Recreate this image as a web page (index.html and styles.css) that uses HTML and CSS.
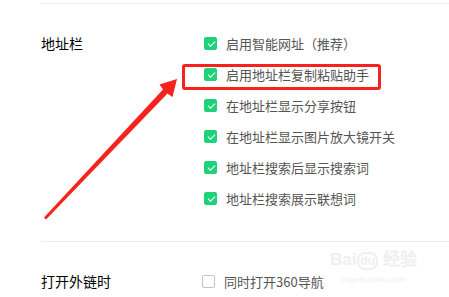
FILE: index.html
```html
<!DOCTYPE html>
<html lang="zh-CN">
<head>
  <meta charset="UTF-8" />
  <title>设置 - 地址栏</title>
  <link rel="stylesheet" href="styles.css">
</head>
<body>

  <div class="page">
    <!-- 地址栏 -->
    <div class="section">
      <div class="label">地址栏</div>
      <ul class="options">
        <li><span class="box on"></span>启用智能网址（推荐）</li>
        <li><span class="box on"></span>启用地址栏复制粘贴助手</li>
        <li><span class="box on"></span>在地址栏显示分享按钮</li>
        <li><span class="box on"></span>在地址栏显示图片放大镜开关</li>
        <li><span class="box on"></span>地址栏搜索后显示搜索词</li>
        <li><span class="box on"></span>地址栏搜索展示联想词</li>
      </ul>
    </div>

    <!-- 打开外链时 -->
    <div class="section second">
      <div class="label">打开外链时</div>
      <ul class="options">
        <li><span class="box"></span>同时打开360导航</li>
      </ul>
    </div>
  </div>

  <!-- annotation -->
  <div class="highlight"></div>
  <svg class="arrow" width="449" height="297" viewBox="0 0 449 297">
    <polygon points="44,217.5 163,89.5 159.5,84.5 177,79 172.5,97 167.5,93.5 46,219.5" fill="#f5231c"/>
  </svg>

  <div class="watermark">
    <div class="wm-logo">Bai<span class="du">du</span> 经验</div>
    <div class="wm-url">jingyan.baidu.com</div>
  </div>

</body>
</html>
```

FILE: styles.css
```css
body {
  margin: 0;
  background: #fff;
  font-family: "Noto Sans CJK SC", "Noto Sans", sans-serif;
  width: 449px;
  height: 297px;
  overflow: hidden;
  position: relative;
}

.page {
  padding-top: 3px;
  padding-left: 41px;
}

.section {
  display: flex;
  border-top: 1px solid #ececec;
  padding: 24px 0 27px;
}

.label {
  width: 163px;
  flex-shrink: 0;
  font-size: 14px;
  font-weight: 400;
  color: #000;
  height: 31px;
  line-height: 31px;
}

.options {
  list-style: none;
  margin: 0;
  padding: 0;
}

.options li {
  display: flex;
  align-items: center;
  height: 31px;
  font-size: 13px;
  color: #555;
}

.box {
  width: 13px;
  height: 13px;
  box-sizing: border-box;
  border-radius: 2px;
  margin-right: 9px;
  border: 1px solid #c4c4c4;
  background: #fff;
  position: relative;
}

.box.on {
  background: #1ed27a;
  border-color: #1ed27a;
}

.box.on::after {
  content: '';
  position: absolute;
  top: 3px;
  left: 2.5px;
  width: 6px;
  height: 3px;
  border-left: 1.3px solid #fff;
  border-bottom: 1.3px solid #fff;
  transform: rotate(-45deg);
}

.second .label {
  width: 161px;
}

.highlight {
  position: absolute;
  left: 182px;
  top: 64px;
  width: 199px;
  height: 26px;
  box-sizing: border-box;
  border: 3px solid #f5231c;
  border-radius: 3px;
}

.arrow {
  position: absolute;
  left: 0;
  top: 0;
}

.watermark {
  position: absolute;
  left: 330px;
  top: 250px;
  color: #efefef;
  font-family: "Liberation Sans", sans-serif;
  text-align: center;
}

.wm-logo {
  font-size: 17px;
  font-weight: bold;
  line-height: 20px;
}

.wm-logo .du {
  font-size: 12px;
  border: 2px solid #efefef;
  border-radius: 8px;
  padding: 0 1px;
  margin-left: 1px;
}

.wm-url {
  font-size: 8px;
  margin-top: 4px;
}
```
